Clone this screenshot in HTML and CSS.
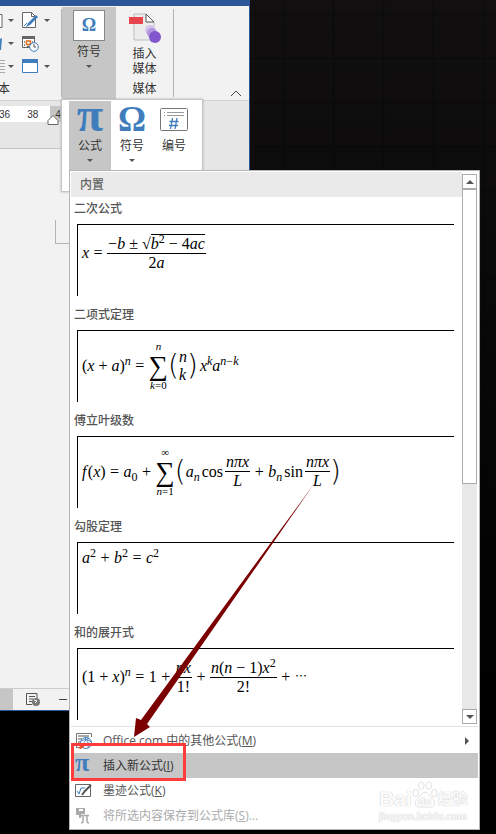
FILE: index.html
```html
<!DOCTYPE html>
<html lang="zh-CN">
<head>
<meta charset="utf-8">
<title>公式</title>
<link rel="stylesheet" href="styles.css">
</head>
<body>
<div class="desktop">
  <section class="window">
    <div class="titlebar"></div>
    <div class="ribbon">
      <div class="group text-group">
        <div class="tool-grid">
          <button class="cut" aria-label="文本框"><svg width="3" height="14"><path d="M0 .5h2v13H0" fill="#fff" stroke="#666"/></svg></button>
          <i class="arrow"></i>
          <button aria-label="签名行"><svg width="17" height="17" viewBox="0 0 17 17"><path d="M.5.5h9l4 4v11H.5z" fill="#fff" stroke="#666"/><path d="M9.500.5v4h4" fill="none" stroke="#666"/><path d="M14 3l2 2-8 8-4 2 2-4z" fill="#3f7dbd"/><path d="M2 14l3-3" stroke="#3f7dbd"/></svg></button>
          <i class="arrow"></i>
          <button class="cut" aria-label="艺术字"><svg width="3" height="14"><path d="M0 2l2-1-1 12H0z" fill="#3f7dbd"/></svg></button>
          <i class="arrow"></i>
          <button aria-label="日期和时间"><svg width="17" height="17" viewBox="0 0 17 17"><path d="M.5 1.500h12v11H.5z" fill="#fff" stroke="#666"/><path d="M0 1h13v3H0z" fill="#666"/><path d="M2 7h1M2 10h1M10 7h1M5 11.500h2" stroke="#666" stroke-width="1.500"/><path d="M4.500 6h4v3.500h-4z" fill="#fff" stroke="#e06c1e" stroke-width="1.500"/><circle cx="12" cy="12" r="4.300" fill="#fff" stroke="#3f7dbd"/><path d="M12 9v3h2" fill="none" stroke="#555"/></svg></button>
          <i></i>
          <button class="cut" aria-label="首字下沉"><svg width="5" height="16"><path d="M0 1.500h5M0 4.500h5M0 7.500h5M0 10.500h5M0 13.500h5" stroke="#aaa"/></svg></button>
          <i class="arrow"></i>
          <button aria-label="对象"><svg width="17" height="15" viewBox="0 0 17 15"><path d="M.5.5h15v13H.5z" fill="#fff" stroke="#3f7dbd"/><path d="M0 0h16v4H0z" fill="#3f7dbd"/></svg></button>
          <i class="arrow"></i>
        </div>
        <span class="group-name">本</span>
      </div>
      <button class="symbol-button">
        <span class="omega-tile">Ω</span>
        <span>符号</span>
        <i class="arrow"></i>
      </button>
      <div class="group media-group">
        <button class="media-button">
          <svg width="34" height="32" viewBox="0 0 34 32"><path d="M6 2h12l8 8v18H6z" fill="#ececec" stroke="#bbb"/><path d="M18 2v8h8z" fill="#fff" stroke="#555"/><path d="M1 5h14v7H1z" fill="#e8444b"/><circle cx="22" cy="18" r="5" fill="#d3c2ec"/><circle cx="24" cy="21" r="5" fill="#b096df"/><circle cx="27" cy="25" r="6" fill="#8257cd"/></svg>
          <span>插入<br>媒体</span>
        </button>
        <span class="group-name">媒体</span>
      </div>
      <button class="collapse" aria-label="折叠功能区"><svg width="12" height="7"><path d="M1 6l5-5 5 5" fill="none" stroke="#444"/></svg></button>
    </div>
    <div class="ruler">
      <div class="ruler-track"><span>36</span><span>38</span><span>40</span></div>
      <svg class="indent" width="12" height="10"><path d="M1 9.500v-4l5-5 5 5v4z" fill="#fff" stroke="#666"/></svg>
    </div>
    <div class="page"><div class="corner"></div></div>
    <footer class="status">
      <span class="status-thumb"></span>
      <svg width="15" height="14" viewBox="0 0 15 14"><path d="M11 5V.5H.5v11H6M3 3.500h6M3 6h4M3 8.500h3" fill="none" stroke="#555"/><circle cx="10" cy="9" r="4" fill="#777"/><path d="M8 7l3 1-2 2" fill="none" stroke="#fff"/></svg>
      <span class="minus"></span>
    </footer>
  </section>

  <div class="symbols-menu">
    <button class="big active"><span class="glyph pi-glyph">π</span><span>公式</span><i class="arrow"></i></button>
    <button class="big"><span class="glyph">Ω</span><span>符号</span><i class="arrow"></i></button>
    <button class="big"><span class="glyph"><svg width="28" height="24" viewBox="0 0 28 24"><rect x=".5" y=".5" width="27" height="22" rx="1" fill="#fff" stroke="#777"/><path d="M4 4.500h1M7 4.500h17M4 7.500h1M7 7.500h17" stroke="#999"/><path d="M12.500 10l-2 11M17 10l-2 11M9.500 13.500h9M9 17.500h9" stroke="#3f7dbd" stroke-width="1.300"/></svg></span><span>编号</span></button>
  </div>

  <div class="equation-menu">
    <div class="gallery">
      <div class="gallery-list">
        <h2>内置</h2>
        <button class="entry">
          <span class="entry-name">二次公式</span>
          <span class="preview"><span class="math"><i>x</i><b>=</b><span class="frac"><span>−<i>b</i> ± √<span class="radicand"><i>b</i><sup>2</sup> − 4<i>ac</i></span></span><span>2<i>a</i></span></span></span></span>
        </button>
        <button class="entry">
          <span class="entry-name">二项式定理</span>
          <span class="preview"><span class="math tall"><span>(<i>x</i> + <i>a</i>)<sup><i>n</i></sup></span><b>=</b><span class="sum"><small><i>n</i></small><span>∑</span><small><i>k</i>=0</small></span><span class="paren">(</span><span class="stack"><i>n</i><i>k</i></span><span class="paren">)</span><span class="after"><i>x</i><sup><i>k</i></sup><i>a</i><sup><i>n</i>−<i>k</i></sup></span></span></span>
        </button>
        <button class="entry">
          <span class="entry-name">傅立叶级数</span>
          <span class="preview"><span class="math tall"><span><i>f</i>&#8202;(<i>x</i>)</span><b>=</b><span><i>a</i><sub>0</sub></span><b>+</b><span class="sum"><small>∞</small><span>∑</span><small><i>n</i>=1</small></span><span class="paren">(</span><span><i>a</i><sub><i>n</i></sub></span><span class="func">cos</span><span class="frac"><i>nπx</i><i>L</i></span><b>+</b><span><i>b</i><sub><i>n</i></sub></span><span class="func">sin</span><span class="frac"><i>nπx</i><i>L</i></span><span class="paren">)</span></span></span>
        </button>
        <button class="entry">
          <span class="entry-name">勾股定理</span>
          <span class="preview"><span class="math short"><span><i>a</i><sup>2</sup></span><b>+</b><span><i>b</i><sup>2</sup></span><b>=</b><span><i>c</i><sup>2</sup></span></span></span>
        </button>
        <button class="entry">
          <span class="entry-name">和的展开式</span>
          <span class="preview"><span class="math"><span>(1 + <i>x</i>)<sup><i>n</i></sup></span><b>=</b><span>1</span><b>+</b><span class="frac"><i>nx</i><span>1!</span></span><b>+</b><span class="frac"><span><i>n</i>(<i>n</i> − 1)<i>x</i><sup>2</sup></span><span>2!</span></span><b>+</b><span class="dots">⋯</span></span></span>
        </button>
      </div>
      <div class="scrollbar">
        <button class="scroll-button" aria-label="向上"><i class="arrow up"></i></button>
        <div class="thumb"></div>
        <div class="track"></div>
        <button class="scroll-button" aria-label="向下"><i class="arrow down"></i></button>
      </div>
    </div>
    <nav class="commands">
      <button class="command"><svg width="18" height="18" viewBox="0 0 18 18"><path d="M1.500 16V1.500h15V5M1 15.500h3" fill="none" stroke="#777"/><path d="M3 4h11M3 7h4M3 10h2" stroke="#aaa" stroke-width="2"/><circle cx="11" cy="11" r="5.500" fill="#fff" stroke="#3f7dbd"/><path d="M6 9c4-2 7-2 10 1M8 15c0-4 3-8 6-9M10 6c3 3 4 6 3 10" fill="none" stroke="#3f7dbd"/><path d="M3 16l6-5v4l-3 2z" fill="#e3532c"/></svg><span>Office.com 中的其他公式(<u>M</u>)</span><i class="submenu"></i></button>
      <button class="command selected"><span class="pi">π</span><span>插入新公式(<u>I</u>)</span></button>
      <button class="command"><svg width="18" height="16" viewBox="0 0 18 16"><path d="M.5 1.500h15v12H.5z" fill="#fff" stroke="#666"/><path d="M2 8l2 3 2-6h4" fill="none" stroke="#3f7dbd"/><path d="M7 12l3-4 6-6" fill="none" stroke="#555" stroke-width="2"/></svg><span>墨迹公式(<u>K</u>)</span></button>
      <button class="command" disabled><svg width="18" height="18" viewBox="0 0 18 18"><path d="M1 1h9v6H6v4H4V8H1z" fill="#aaa"/><path d="M4 2h4v2H4z" fill="#fff"/><path d="M5 8.500h9M8 8v6q0 2-2 2M12 8v6q0 2 2 2" fill="none" stroke="#aaa" stroke-width="1.500"/></svg><span>将所选内容保存到公式库(<u>S</u>)...</span></button>
    </nav>
  </div>

  <div class="watermark">
    <div class="brand"><span>Bai</span><span class="paw"><svg width="26" height="30" viewBox="0 0 28 30"><g fill="#fff" stroke="#ddd"><ellipse cx="4" cy="13" rx="3" ry="4"/><ellipse cx="10" cy="5" rx="3" ry="4"/><ellipse cx="18" cy="5" rx="3" ry="4"/><ellipse cx="24" cy="13" rx="3" ry="4"/><path d="M14 12c4 0 5 5 8 7 4 3 3 9-2 9H8c-5 0-6-6-2-9 3-2 4-7 8-7z"/></g></svg><small>du</small></span><span class="jy">经验</span></div>
    <div class="site">jingyan.baidu.com</div>
  </div>
  <div class="highlight"></div>
  <svg class="pointer" width="180" height="256" viewBox="0 0 180 256"><path d="M180 1L13 241l3 3-16 10 2-19 5 2z" fill="#7b0000"/></svg>
</div>
</body>
</html>
```
FILE: styles.css
```css
* { box-sizing: border-box; }
body { margin: 0; background: #000; color: #333; font: 12px/16px "Open Sans", "Noto Sans CJK SC", sans-serif; }
button { margin: 0; padding: 0; border: 0; background: none; color: inherit; font: inherit; }
svg { display: block; flex: none; }
.desktop {
  position: relative; min-height: 100vh; overflow: hidden;
  background:
    linear-gradient(transparent, #000 700px),
    repeating-linear-gradient(90deg, transparent 0 32px, #0d0c0d 33px 34px, transparent 35px 50px),
    repeating-linear-gradient(transparent 0 13px, #0d0c0d 14px 15px, transparent 16px 44px),
    #110f10;
}
.arrow { width: 0; height: 0; border: 3px solid transparent; border-top-color: #555; border-bottom: 0; }

/* Document window */
.window { width: 250px; height: 711px; display: flex; flex-direction: column; background: #e6e6e6; border-right: 1px solid #2b579a; border-bottom: 1px solid #2b579a; }
.titlebar { height: 6px; background: #2b579a; }
.ribbon { height: 95px; display: flex; background: #f2f2f2; border-bottom: 1px solid #d2d2d2; }
.group { display: flex; flex-direction: column; justify-content: space-between; }
.text-group { width: 62px; margin: 3px 0; border-right: 1px solid #b5b5b5; }
.text-group .group-name { margin-left: -2px; }
.tool-grid { display: grid; grid-template-columns: 8px 14px 22px 8px; grid-auto-rows: 23px; align-items: center; }
.symbol-button { width: 54px; margin-top: 1px; padding-top: 3px; display: flex; flex-direction: column; align-items: center; background: #c6c6c6; }
.omega-tile { width: 32px; height: 31px; margin-bottom: 3px; border: 1px solid #888; background: #fff; color: #3f7dbd; font: bold 18px/29px "Liberation Serif", serif; }
.symbol-button .arrow { margin-top: 5px; }
.media-group { width: 58px; margin: 3px 0; padding-top: 3px; align-items: center; border-right: 1px solid #b5b5b5; }
.media-button { display: flex; flex-direction: column; align-items: center; line-height: 15px; }
.media-button span { margin-top: 2px; }
.collapse { margin: auto 7px 3px auto; }
.ruler { height: 48px; padding-top: 5px; border-bottom: 1px solid #c6c6c6; width: 190px; }
.ruler-track { height: 16px; display: flex; background: linear-gradient(90deg, #fff 51px, #c6c6c6 51px); font: 10px/17px "Liberation Sans", sans-serif; gap: 17px; margin-left: -1px; }
.indent { margin: -7px 0 0 47px; }
.page { flex: 1; width: 190px; padding: 71px 0 0 55px; background: #f2f2f2; }
.corner { height: 24px; border: solid #b5b5b5; border-width: 0 0 1px 1px; }
.status { height: 22px; display: flex; align-items: center; background: #f2f2f2; border-top: 1px solid #ccc; }
.status-thumb { width: 13px; align-self: stretch; margin-right: 13px; background: #c6c6c6; }
.minus { width: 8px; height: 1px; margin-left: 18px; background: #444; }

/* Symbols drop-down */
.symbols-menu { position: absolute; left: 61px; top: 99px; width: 142px; height: 93px; padding: 1px 7px; display: flex; background: #fff; border: 1px solid #c6c6c6; box-shadow: 0 0 2px #aaa; }
.big { width: 42px; display: flex; flex-direction: column; align-items: center; }
.big.active { background: #c6c6c6; }
.glyph { height: 37px; display: grid; place-items: center; color: #3f7dbd; font: bold 35px/36px "Liberation Serif", serif; }
.pi-glyph { padding-bottom: 10px; font-size: 48px; line-height: 26px; }
.big .arrow { margin-top: 5px; }

/* Equation menu */
.equation-menu { position: absolute; left: 69px; top: 170px; width: 411px; padding: 1px; background: #fff; border: 1px solid #b5b5b5; }
.gallery { height: 555px; display: flex; border-bottom: 1px solid #e1e1e1; }
.gallery-list { flex: 1; height: 548px; overflow: hidden; }
h2 { margin: 0; padding-left: 9px; background: #eaeaea; color: #666; font-size: 12px; line-height: 25px; font-weight: 500; }
.entry { width: 100%; height: 106px; padding: 0 8px 0 6px; display: flex; flex-direction: column; align-items: stretch; text-align: left; }
.entry-name { margin: 0 0 3px -3px; line-height: 24px; color: #555; font-weight: 500; }
.preview { height: 72px; padding-left: 4px; border: solid #000; border-width: 1px 0 0 1px; color: #000; }
.math { height: 56px; display: flex; align-items: center; font: 16px/18px "Liberation Serif", serif; white-space: nowrap; }
.math.short { height: 30px; }
.math.tall { height: 69px; }
.math b { width: 10px; margin: 0 4px; font-weight: normal; text-align: center; }
.math sup, .math sub { font-size: 12px; line-height: 0; }
.frac { display: flex; flex-direction: column; align-items: center; }
.frac > :first-child { padding: 0 1px; border-bottom: 1px solid #000; }
.radicand { border-top: 1px solid #000; }
.sum { display: flex; flex-direction: column; align-items: center; line-height: 28px; font-size: 27px; }
.sum small { font-size: 11px; line-height: 11px; }
.paren { font: 200 28px/30px "DejaVu Sans", sans-serif; }
.stack { display: flex; flex-direction: column; }
.after { margin-left: 2px; }
.func { margin: 0 2px; }
.dots { font-size: 12px; }
.scrollbar { width: 15px; height: 552px; padding-top: 2px; margin-right: 1px; display: flex; flex-direction: column; }
.scroll-button { height: 15px; flex: none; display: grid; place-items: center; background: #fff; border: 1px solid #ababab; }
.scroll-button .arrow { border-width: 4px; border-bottom-width: 0; }
.scroll-button .up { transform: rotate(180deg); }
.thumb { flex: 294; background: #fff; border: 1px solid #ababab; }
.track { flex: 226; background: #e8e8e8; }
.commands { padding-top: 1px; }
.command { width: 100%; height: 25px; padding: 0 9px 0 4px; display: flex; align-items: center; text-align: left; color: #555; }
.command > :first-child { width: 18px; margin-right: 10px; }
.command.selected { background: #c6c6c6; color: #333; }
.command:disabled { color: #aaa; }
.pi { padding-bottom: 5px; color: #3f7dbd; font: bold 26px/20px "Liberation Serif", serif; }
.submenu { margin-left: auto; border: 4px solid transparent; border-left-color: #555; border-right: 0; }

/* Overlays */
.watermark { position: absolute; left: 379px; top: 780px; color: #fcfcfc; text-shadow: 0 0 1px #ccc, 0 0 1px #ccc; white-space: nowrap; }
.brand { height: 30px; display: flex; align-items: flex-end; font: bold 21px/22px "Liberation Sans", "Noto Sans CJK SC", sans-serif; }
.paw { display: grid; }
.paw > * { grid-area: 1 / 1; }
.paw small { place-self: end center; font-size: 11px; line-height: 18px; }
.jy { font-size: 15px; }
.site { font: bold 10px/14px "Liberation Sans", sans-serif; }
.highlight { position: absolute; left: 71px; top: 743px; width: 115px; height: 38px; border: 3px solid #ff3b3b; }
.pointer { position: absolute; left: 134px; top: 483px; }
```
